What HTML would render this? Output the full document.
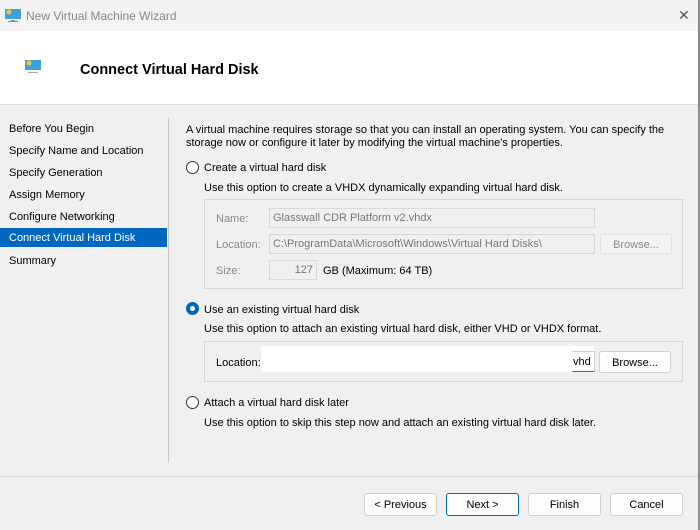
<!DOCTYPE html><html><head><style>
*{margin:0;padding:0;box-sizing:border-box}
body{width:700px;height:530px;background:#f0f0f0;font-family:"Liberation Sans",sans-serif;font-size:11px;color:#000;position:relative;overflow:hidden}
.a{position:absolute;white-space:nowrap}
.title{left:0;top:0;width:700px;height:31px;background:#f3f3f3}
.hdr{left:0;top:31px;width:700px;height:74px;background:#fff;border-bottom:1px solid #dcdcdc}
.nav{left:9px}
.sel{left:0;top:228px;width:167px;height:19px;background:#0067c0;color:#fff;padding:4px 9px}
.g{color:#8a8a8a}
.box{border:1px solid #d6d6d6}
.inp{border:1px solid #d9d9d9;background:#f0f0f0;color:#777;padding:3px 3px}
.btn{border:1px solid #d0d0d0;border-radius:3px;background:#fdfdfd;text-align:center;line-height:23px;height:23px}
.rad{width:13px;height:13px;border:1px solid #333;border-radius:50%;background:#fff}
</style></head><body>
<div class="a title"></div>
<svg class="a" style="left:5px;top:7px" width="16" height="16"><rect x="0" y="2" width="16" height="10" fill="#3fa0e0"/><circle cx="4" cy="5" r="2.5" fill="#f6c830"/><rect x="6" y="13" width="4" height="1" fill="#888"/><rect x="3" y="14" width="10" height="1" fill="#888"/></svg>
<div class="a" style="left:26px;top:9px;font-size:12px;color:#888">New Virtual Machine Wizard</div>
<div class="a" style="left:678px;top:7px;font-size:14px;color:#555">✕</div>
<div class="a hdr"></div>
<svg class="a" style="left:25px;top:60px" width="16" height="14"><rect x="0" y="0" width="16" height="10" fill="#3fa0e0"/><circle cx="4" cy="3" r="2.5" fill="#f6c830"/><rect x="3" y="12" width="10" height="1" fill="#aaa"/></svg>
<div class="a" style="left:80px;top:62px;font-size:14.5px;font-weight:bold">Connect Virtual Hard Disk</div>
<div class="a nav" style="top:123px">Before You Begin</div>
<div class="a nav" style="top:145px">Specify Name and Location</div>
<div class="a nav" style="top:167px">Specify Generation</div>
<div class="a nav" style="top:189px">Assign Memory</div>
<div class="a nav" style="top:211px">Configure Networking</div>
<div class="a sel">Connect Virtual Hard Disk</div>
<div class="a nav" style="top:255px">Summary</div>
<div class="a" style="left:168px;top:118px;width:1px;height:345px;background:#c8c8c8"></div>
<div class="a" style="left:186px;top:124px;line-height:13px">A virtual machine requires storage so that you can install an operating system. You can specify the<br>storage now or configure it later by modifying the virtual machine's properties.</div>
<div class="a rad" style="left:186px;top:161px"></div>
<div class="a" style="left:204px;top:162px">Create a virtual hard disk</div>
<div class="a" style="left:204px;top:182px">Use this option to create a VHDX dynamically expanding virtual hard disk.</div>
<div class="a box" style="left:204px;top:199px;width:479px;height:90px"></div>
<div class="a g" style="left:216px;top:213px">Name:</div>
<div class="a inp" style="left:269px;top:208px;width:326px;height:20px">Glasswall CDR Platform v2.vhdx</div>
<div class="a g" style="left:216px;top:239px">Location:</div>
<div class="a inp" style="left:269px;top:234px;width:326px;height:20px">C:\ProgramData\Microsoft\Windows\Virtual Hard Disks\</div>
<div class="a btn g" style="left:600px;top:234px;width:72px;height:20px;line-height:20px;background:#f3f3f3;border-color:#e3e3e3">Browse...</div>
<div class="a g" style="left:216px;top:265px">Size:</div>
<div class="a inp" style="left:269px;top:260px;width:48px;height:20px;text-align:right">127</div>
<div class="a" style="left:323px;top:265px">GB (Maximum: 64 TB)</div>
<div class="a rad" style="left:186px;top:302px;border:4px solid #0067c0"></div>
<div class="a" style="left:204px;top:304px">Use an existing virtual hard disk</div>
<div class="a" style="left:204px;top:323px">Use this option to attach an existing virtual hard disk, either VHD or VHDX format.</div>
<div class="a box" style="left:204px;top:341px;width:479px;height:41px"></div>
<div class="a" style="left:216px;top:357px">Location:</div>
<div class="a" style="left:261px;top:346px;width:333px;height:26px;background:#fff"></div>
<div class="a" style="left:572px;top:351px;width:23px;height:21px;border:1px solid #d0d0d0;border-left:none;border-bottom:1px solid #666;background:#fff;padding:4px 1px">vhd</div>
<div class="a btn" style="left:599px;top:351px;width:72px;height:22px;line-height:22px">Browse...</div>
<div class="a rad" style="left:186px;top:396px"></div>
<div class="a" style="left:204px;top:397px">Attach a virtual hard disk later</div>
<div class="a" style="left:204px;top:417px">Use this option to skip this step now and attach an existing virtual hard disk later.</div>
<div class="a" style="left:0;top:476px;width:698px;height:1px;background:#d6d6d6"></div>
<div class="a btn" style="left:364px;top:493px;width:73px">&lt; Previous</div>
<div class="a btn" style="left:446px;top:493px;width:73px;border-color:#0067c0">Next &gt;</div>
<div class="a btn" style="left:528px;top:493px;width:73px">Finish</div>
<div class="a btn" style="left:610px;top:493px;width:73px">Cancel</div>
<div class="a" style="left:698px;top:0;width:2px;height:530px;background:#8a8a8a"></div>
</body></html>
